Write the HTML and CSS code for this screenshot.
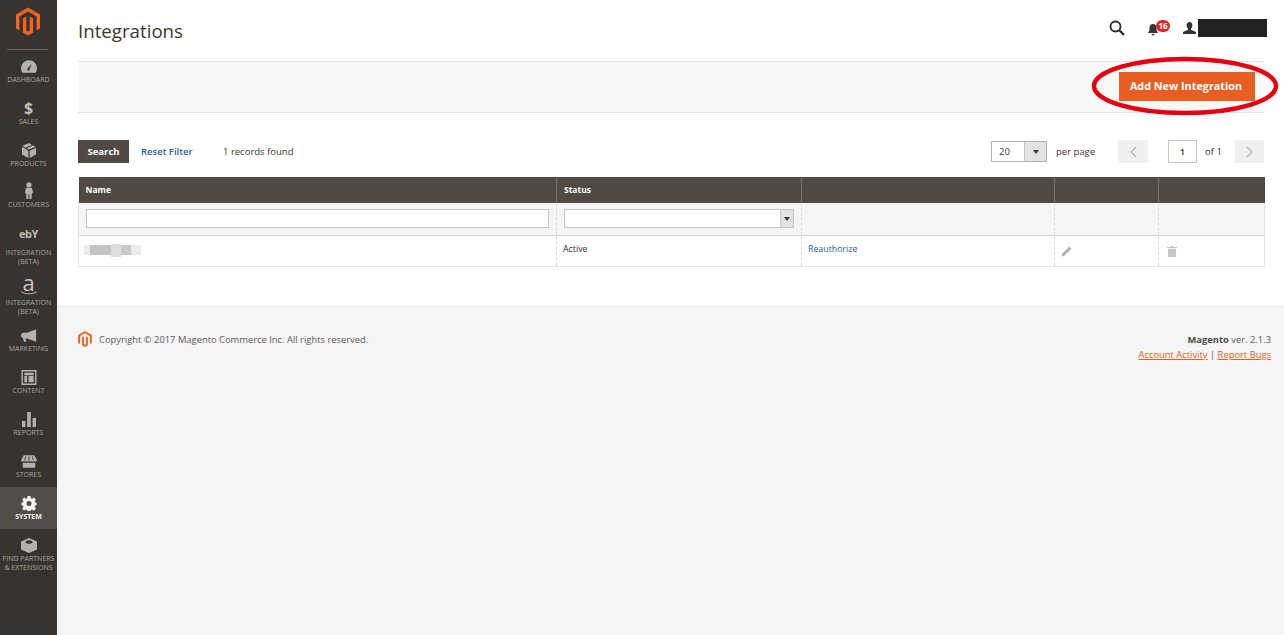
FILE: index.html
```html
<!DOCTYPE html>
<html lang="en">
<head>
<meta charset="utf-8">
<title>Integrations</title>
<link rel="stylesheet" href="styles.css">
</head>
<body>
<nav class="side">
  <div class="side-logo">
    <svg class="logo-mark" viewBox="0 0 24 28"><path fill="#f26322" d="M12 0 0 6.9v14l3.4 2V8.9L12 3.9l8.600 5v14l3.400-2v-14zM13.700 23.100 12 24.100l-1.700-1V9l-3.400 2v14l5.100 3 5.100-3V11l-3.400-2z"/></svg>
  </div>
  <a class="nav-item"><svg class="ico" viewBox="0 0 18 14"><path d="M9 0a9 9 0 0 0-9 9c0 2 .6 3.700 1.500 5h15c.9-1.300 1.500-3 1.500-5a9 9 0 0 0-9-9zm.9 9.600a1.500 1.500 0 1 1-2-.9L12 3.800z"/></svg><span>Dashboard</span></a>
  <a class="nav-item"><span class="dollar">$</span><span>Sales</span></a>
  <a class="nav-item"><svg class="ico" viewBox="0 0 16 16"><path d="M8 0 1 2.800 4 5l7-3zM12.500 2.500 5.500 5.500 8 7l7-3zM.5 4v8.200L7.300 16V8.200zM15.500 5 8.700 8.200V16l6.800-3.800z"/></svg><span>Products</span></a>
  <a class="nav-item"><svg class="ico ico-person" viewBox="0 0 10 18"><circle cx="5" cy="3" r="2.800"/><path d="M2 6.200h6l1.400 5-1.400 1-.2 5.800H5.500v-5h-1v5H2.200L2 12.200l-1.400-1z"/></svg><span>Customers</span></a>
  <a class="nav-item nav-ebay"><b class="ebay">ebY</b><span>Integration<br>(Beta)</span></a>
  <a class="nav-item nav-amz"><span class="amz">a</span><svg class="smile" viewBox="0 0 18 4"><path d="M1 .5C5 3.500 12 3.500 17 .8" fill="none" stroke="#bdb9b3" stroke-width="1"/></svg><span>Integration<br>(Beta)</span></a>
  <a class="nav-item"><svg class="ico" viewBox="0 0 18 14"><path d="M17 0v14L7 10.500H5l1 3.500H3.500L2.200 10C1 9.700 0 8.600 0 7c0-1.800 1.200-3.200 3-3.200h4z"/></svg><span>Marketing</span></a>
  <a class="nav-item"><svg class="ico" viewBox="0 0 16 16"><path fill-rule="evenodd" d="M0 0h16v16H0zm1.500 1.500v13h13v-13zM3 3h10v2.500H3zm0 3.500h3V13H3zm4.500 0H13V13H7.500z"/></svg><span>Content</span></a>
  <a class="nav-item"><svg class="ico" viewBox="0 0 14 15"><path d="M0 9h3.400v6H0zM5.200 0h3.600v15H5.200zM10.600 6H14v9h-3.400z"/></svg><span>Reports</span></a>
  <a class="nav-item"><svg class="ico" viewBox="0 0 18 14"><path fill-rule="evenodd" d="M3 0h12l3 5.500a2 2 0 0 1-3.400 1 2.200 2.200 0 0 1-2.800 0 2.200 2.200 0 0 1-2.800 0 2.200 2.200 0 0 1-2.800 0 2.200 2.200 0 0 1-2.800 0A2 2 0 0 1 0 5.500zM5 1 3.600 5.500h1L5.800 1zM8.600 1 8.400 5.500h1.200L9.400 1zM12.200 1l1.200 4.500h1L13 1zM2 8.500h14V14H2z"/></svg><span>Stores</span></a>
  <a class="nav-item nav-active"><svg class="ico" viewBox="0 0 16 16"><path fill-rule="evenodd" d="m6.500 0h3l.4 2.200 1.500.6L13.200 1.500l2.100 2.100L14 5.500l.6 1.400L16 6.800v3l-1.400.4-.6 1.400 1.300 1.900-2.100 2.100-1.800-1.300-1.500.6-.4 2.100h-3l-.4-2.100-1.500-.6-1.800 1.300L.7 13.500 2 11.600l-.6-1.400L0 9.800v-3l1.400.1.600-1.400L.7 3.600l2.100-2.100 1.800 1.300 1.500-.6zM8 5.300a2.700 2.700 0 1 0 0 5.400 2.700 2.700 0 0 0 0-5.400z"/></svg><span>System</span></a>
  <a class="nav-item nav-find"><svg class="ico" viewBox="0 0 16 15"><path fill-rule="evenodd" d="M8 0l8 3.500v8L8 15l-8-3.500v-8zM8 2.200C6 2.200 4.500 3 4.500 4S6 5.800 8 5.800 11.500 5 11.500 4 10 2.200 8 2.200z"/></svg><span>Find Partners<br>&amp; Extensions</span></a>
</nav>

<div class="page">
  <div class="content">
    <header class="top">
      <h1 class="title">Integrations</h1>
      <div class="top-actions">
        <svg class="top-search" viewBox="0 0 16 16"><circle cx="6.500" cy="6.500" r="5" fill="none" stroke="#2a2a2a" stroke-width="1.800"/><path d="m10.300 10.300 4.700 4.700" stroke="#2a2a2a" stroke-width="2.200"/></svg>
        <div class="bell-wrap">
          <svg class="bell" viewBox="0 0 12 12"><path fill="#333" d="M6 0c2.300 0 3.600 1.700 3.600 4v2.500L11 9H1l1.400-2.500V4C2.400 1.700 3.700 0 6 0zM4.600 10h2.800A1.400 1.400 0 0 1 6 11.500 1.400 1.400 0 0 1 4.600 10z"/></svg>
          <span class="badge">16</span>
        </div>
        <div class="user">
          <svg class="user-ico" viewBox="0 0 13 12"><path fill="#333" d="M6.500 0c1.900 0 2.900 1.400 2.900 3.200S8.500 6.200 8 6.800v1L13 10v2H0v-2l5-2.200v-1C4.500 6.200 3.600 5 3.600 3.200S4.600 0 6.500 0z"/></svg>
          <span class="user-name"></span>
        </div>
      </div>
    </header>

    <div class="toolbar">
      <button class="add-btn">Add New Integration</button>
    </div>

    <div class="filters">
      <div class="filters-left">
        <button class="search-btn">Search</button>
        <a class="reset">Reset Filter</a>
        <span class="found">1 records found</span>
      </div>
      <div class="pager">
        <div class="per-select"><span class="per-val">20</span><span class="per-arrow"><i class="caret"></i></span></div>
        <span class="per-label">per page</span>
        <button class="page-btn page-prev"><svg viewBox="0 0 7 12"><path d="M6 1 1 6l5 5" fill="none" stroke="#b8b5b2" stroke-width="1.200"/></svg></button>
        <span class="page-input">1</span>
        <span class="page-of">of 1</span>
        <button class="page-btn page-next"><svg viewBox="0 0 7 12"><path d="m1 1 5 5-5 5" fill="none" stroke="#b8b5b2" stroke-width="1.200"/></svg></button>
      </div>
    </div>

    <table class="grid">
      <colgroup>
        <col class="c1"><col class="c2"><col class="c3"><col class="c4"><col class="c5">
      </colgroup>
      <thead>
        <tr class="head"><th>Name</th><th>Status</th><th></th><th></th><th></th></tr>
        <tr class="filter">
          <td><div class="f-input"></div></td>
          <td><div class="f-select"><span class="f-arrow"><i class="caret"></i></span></div></td>
          <td></td><td></td><td></td>
        </tr>
      </thead>
      <tbody>
        <tr class="row">
          <td><div class="blur-name"><i class="b1"></i><i class="b2"></i><i class="b3"></i><i class="b4"></i><i class="b5"></i></div></td>
          <td class="cell-text">Active</td>
          <td class="cell-text"><a class="link">Reauthorize</a></td>
          <td><svg class="pencil" viewBox="0 0 11 11"><path fill="#b5b2ae" d="M8.300.6 10.400 2.700 3.400 9.700.4 10.600l.9-3z"/></svg></td>
          <td><svg class="trash" viewBox="0 0 10 11"><path fill="#c9c6c2" d="M0 1h3.500V0h3v1H10v1.300H0zM1 3h8v8H1z"/></svg></td>
        </tr>
      </tbody>
    </table>
  </div>

  <footer class="foot">
    <div class="copy">
      <svg class="foot-logo" viewBox="0 0 24 28"><path fill="#f26322" d="M12 0 0 6.900v14l3.400 2V8.900L12 3.900l8.600 5v14l3.400-2v-14zM13.700 23.100 12 24.100l-1.700-1V9l-3.400 2v14l5.100 3 5.100-3V11l-3.400-2z"/></svg>
      <span>Copyright © 2017 Magento Commerce Inc. All rights reserved.</span>
    </div>
    <div class="ver">
      <div><b>Magento</b> ver. 2.1.3</div>
      <div class="ver-links"><a>Account Activity</a> <span>|</span> <a>Report Bugs</a></div>
    </div>
  </footer>
</div>

<svg class="ring" viewBox="0 0 188 60"><ellipse cx="94" cy="30" rx="91" ry="27" fill="none" stroke="#e6000f" stroke-width="4.500"/></svg>
</body>
</html>
```

FILE: styles.css
```css
* { box-sizing: border-box; }
html, body { height: 100%; }
body {
  margin: 0;
  display: flex;
  min-height: 635px;
  overflow: hidden;
  background: #f5f5f5;
  font-family: "Open Sans", "Liberation Sans", sans-serif;
  color: #41362f;
}

/* sidebar */
.side {
  width: 57px;
  flex: none;
  background: #373330;
  color: #aaa6a0;
  text-align: center;
}
.side-logo {
  height: 50px;
  padding-top: 7px;
  border-bottom: 1px solid #66625e;
  margin: 0 9px 0 7px;
}
.logo-mark { width: 24px; height: 29px; display: block; margin: 0 auto; }
.nav-item {
  display: flex;
  flex-direction: column;
  align-items: center;
  height: 42px;
  padding-top: 9px;
  font-size: 7px;
  line-height: 9px;
  text-transform: uppercase;
  white-space: nowrap;
}
.ico { width: 16px; height: 15px; fill: #b5b1ab; display: block; margin-bottom: 1px; flex: none; }
.ico-person { height: 17px; margin-top: -3px; }
.dollar { font-size: 16px; line-height: 15px; font-weight: 700; color: #c2beb8; margin-bottom: 1px; }
.nav-ebay { height: 50px; }
.ebay { font-size: 11px; line-height: 13px; color: #bdb9b3; margin-bottom: 8px; text-transform: none; letter-spacing: -.5px; }
.nav-amz { height: 51px; padding-top: 5px; }
.amz { font-size: 22px; line-height: 18px; color: #c8c4be; text-transform: none; }
.smile { width: 18px; height: 4px; margin: 0 0 3px; display: block; flex: none; }
.nav-active { background: #514d49; color: #f2f0ee; font-weight: 700; }
.nav-active .ico { fill: #f7f5f3; }
.nav-find { height: 51px; }

/* page */
.page { flex: 1; display: flex; flex-direction: column; min-width: 0; }
.content { background: #fff; padding: 0 20px 0 21px; height: 306px; flex: none; }

.top { display: flex; justify-content: space-between; align-items: center; height: 61px; }
.title { margin: 0; font-size: 18.700px; font-weight: 400; color: #41362f; line-height: 62px; }
.top-actions { display: flex; align-items: center; margin-right: -3px; height: 37px; margin-top: -6px; }
.top-search { width: 16px; height: 16px; margin-right: 22px; }
.bell-wrap { position: relative; width: 36px; height: 18px; }
.bell { width: 12px; height: 12px; position: absolute; left: 0; top: 5px; }
.badge {
  position: absolute; left: 9px; top: 1px;
  width: 14px; height: 12px; border-radius: 6px;
  background: #e22626; color: #fff;
  font-size: 8px; font-weight: 700; line-height: 12px; text-align: center;
}
.user { display: flex; align-items: center; gap: 2px; }
.user-ico { width: 13px; height: 12px; }
.user-name { width: 69px; height: 18px; background: #222; display: block; }

.toolbar {
  height: 52px;
  background: #f8f8f8;
  border-top: 1px solid #e3e3e3;
  border-bottom: 1px solid #e3e3e3;
  display: flex;
  justify-content: flex-end;
  align-items: flex-start;
  padding: 10px 9px 0 0;
}
.add-btn {
  width: 136px; height: 29px; border: 0; padding: 0 2px 3px 0;
  background: #e85d22; color: #fff;
  font: 700 10.800px "Open Sans", sans-serif;
}

.filters { display: flex; justify-content: space-between; align-items: center; height: 24px; margin-top: 27px; font-size: 9.500px; position: relative; top: 0; }
.filters-left { display: flex; align-items: center; margin-top: -1px; }
.search-btn {
  width: 51px; height: 23px; border: 0; padding: 0;
  background: #514943; color: #fff;
  font: 700 9.500px "Open Sans", sans-serif;
}
.reset { color: #2f5d97; font-weight: 600; margin-left: 12px; width: 82px; }
.found { color: #41362f; }
.pager { display: flex; align-items: center; margin-top: -1px; }
.per-select { width: 56px; height: 21px; border: 1px solid #b5b2ae; display: flex; background: #fff; }
.per-val { flex: 1; padding-left: 7px; line-height: 19px; }
.per-arrow { width: 22px; background: #e3e3e3; border-left: 1px solid #c9c6c2; display: flex; align-items: center; justify-content: center; }
.caret { width: 0; height: 0; border: 3px solid transparent; border-top: 4px solid #41362f; border-bottom: 0; display: block; }
.per-label { margin-left: 9px; width: 62px; }
.page-btn { width: 30px; height: 23px; border: 0; background: #f0f0f0; padding: 0; display: flex; align-items: center; justify-content: center; }
.page-next { width: 29px; }
.page-btn svg { width: 7px; height: 12px; }
.page-input { width: 29px; height: 23px; margin-left: 20px; border: 1px solid #c9c6c2; background: #fff; text-align: center; line-height: 21px; font-weight: 600; }
.page-of { margin-left: 8px; width: 30px; color: #41362f; }

.grid { width: 1186px; margin-top: 13px; border-collapse: collapse; table-layout: fixed; font-size: 9px; }
.c1 { width: 478px; }
.c2 { width: 245px; }
.c3 { width: 253px; }
.c4 { width: 104px; }
.c5 { width: 106px; }
.grid th, .grid td { padding: 0; }
.head { height: 26px; background: #514943; }
.head th { color: #fff; font-size: 8.500px; font-weight: 700; text-align: left; padding: 0 0 1px 7px; border-left: 1px solid #7a736d; }
.head th:first-child { border-left: 0; }
.filter { height: 32px; background: #f5f5f5; border-bottom: 1px solid #d9d7d5; }
.filter td { padding: 0 7px; border-left: 1px dashed #dedcda; vertical-align: middle; }
.filter td:first-child { border-left: 1px solid #e3e3e3; }
.filter td:last-child { border-right: 1px solid #e3e3e3; }
.f-input { height: 19px; background: #fff; border: 1px solid #c9c6c2; }
.f-select { height: 19px; background: #fff; border: 1px solid #c9c6c2; display: flex; justify-content: flex-end; }
.f-arrow { width: 13px; background: #e3e3e3; border-left: 1px solid #c9c6c2; display: flex; align-items: center; justify-content: center; }
.row { height: 31px; background: #fff; border-bottom: 1px solid #e3e3e3; }
.row td { border-left: 1px dashed #d9d7d5; padding-left: 6px; vertical-align: middle; }
.row td:first-child { border-left: 1px solid #e3e3e3; padding-left: 5px; }
.row td:last-child { border-right: 1px solid #e3e3e3; }
.cell-text { vertical-align: top !important; padding-top: 7px !important; line-height: 12px; color: #303030; font-size: 8.800px; }
.link { color: #2f5d97; }
.blur-name { display: flex; height: 13px; align-items: center; filter: blur(.6px); margin-top: -1px; }
.blur-name i { display: block; height: 10px; }
.b1 { width: 6px; background: #ececec; }
.b2 { width: 21px; background: #c5c3c3; }
.b3 { width: 10px; background: #dededa; height: 13px !important; }
.b4 { width: 10px; background: #cbc9c9; }
.b5 { width: 10px; background: #ebebeb; }
.pencil { width: 11px; height: 11px; display: block; margin: 2px 0 0 0; }
.trash { width: 10px; height: 11px; display: block; margin: 2px 0 0 2px; }

/* footer */
.foot {
  flex: 1;
  background: #f5f5f5;
  border-top: 1px solid #e9e9e9;
  display: flex;
  justify-content: space-between;
  padding: 25px 13px 0 21px;
  font-size: 9.400px;
  color: #5f5a56;
}
.copy { display: flex; align-items: flex-start; gap: 7px; line-height: 16px; }
.foot-logo { width: 14px; height: 16px; display: block; margin-top: -1px; }
.ver { text-align: right; line-height: 16px; }
.ver b { color: #514943; }
.ver-links { color: #e85d22; margin-top: -1px; }
.ver-links a { text-decoration: underline; }
.ver-links span { color: #5f5a56; }

.ring { position: absolute; left: 1091px; top: 56px; width: 188px; height: 60px; }
```
